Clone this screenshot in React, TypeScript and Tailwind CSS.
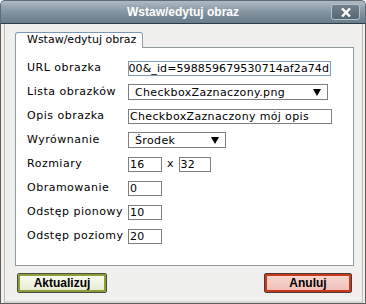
import React from "react"

const font = { fontFamily: '"DejaVu Sans", Verdana, sans-serif' }
const boldFont = { fontFamily: '"Liberation Sans", Arial, sans-serif' }

function Row({ label, children }: { label: string; children: React.ReactNode }) {
  return (
    <div className="flex h-[24px] items-center">
      <div className="w-[101px] shrink-0 text-[11px] tracking-[0.5px] text-black">{label}</div>
      {children}
    </div>
  )
}

function Field({ value, className = "" }: { value: string; className?: string }) {
  return (
    <div
      className={`flex h-[15px] items-center overflow-hidden whitespace-nowrap border border-[#808080] bg-white pl-[1px] text-[11px] leading-none tracking-[0.35px] text-black ${className}`}
    >
      {value}
    </div>
  )
}

function Select({ value, className = "" }: { value: string; className?: string }) {
  return (
    <div
      className={`flex h-[16px] items-center justify-between border border-[#808080] bg-white pl-[6px] pr-[6px] text-[11px] leading-none tracking-[0.35px] text-black ${className}`}
    >
      <span className="whitespace-nowrap">{value}</span>
      <svg width="8" height="7" viewBox="0 0 8 7">
        <path d="M0 0h8L4 7z" fill="#000" />
      </svg>
    </div>
  )
}

export default function App() {
  return (
    <div className="h-[304px] w-[366px] bg-white" style={font}>
      <div className="flex h-full flex-col">
        {/* title bar */}
        <div className="relative flex h-[24px] shrink-0 items-center justify-center rounded-t-[5px] border border-b-[#2f3a42] border-[#5d6d78] bg-gradient-to-b from-[#aebbc5] via-[#8494a0] to-[#6a7c89]">
          <span className="text-[12px] font-bold text-white" style={boldFont}>
            Wstaw/edytuj obraz
          </span>
          <div className="absolute right-[5px] top-[3px] flex h-[16px] w-[29px] items-center justify-center rounded-[3px] border border-[#b6c2cb] bg-gradient-to-b from-[#74848f] to-[#566671]">
            <svg width="10" height="9" viewBox="0 0 10 9">
              <path d="M1 0.5l8 8M9 0.5l-8 8" stroke="#fff" strokeWidth="2.4" />
            </svg>
          </div>
        </div>

        {/* body */}
        <div className="flex flex-1 flex-col border-x border-b border-[#5c5c5c] bg-[#f0f0ee] shadow-[inset_3px_0_0_#f0f0ee,inset_4px_0_0_#cdb9a4,inset_-2px_0_0_#f0f0ee,inset_-3px_0_0_#cdb9a4,inset_0_-2px_0_#d8d8d4]">
          <div className="flex flex-col px-[14px] pt-[8px]">
            {/* tab */}
            <div className="relative z-10 -mb-[1px] flex h-[16px] w-[128px] items-center rounded-t-[3px] border border-b-0 border-[#919b9c] border-t-[#7a96b0] bg-white pl-[11px] text-[11px] text-black">
              Wstaw/edytuj obraz
            </div>
            {/* panel */}
            <div className="h-[219px] w-[339px] border border-[#919b9c] bg-white pl-[11px] pt-[8px]">
              <Row label="URL obrazka">
                <div className="flex h-[15px] w-[203px] items-center justify-end overflow-hidden whitespace-nowrap border border-[#7f9db9] bg-white pr-[1px] text-[11px] leading-none tracking-[0.1px] text-black">
                  400&amp;_id=598859679530714af2a74d
                </div>
              </Row>
              <Row label="Lista obrazków">
                <Select value="CheckboxZaznaczony.png" className="w-[200px]" />
              </Row>
              <Row label="Opis obrazka">
                <Field value="CheckboxZaznaczony mój opis" className="w-[204px]" />
              </Row>
              <Row label="Wyrównanie">
                <Select value="Środek" className="w-[98px]" />
              </Row>
              <Row label="Rozmiary">
                <Field value="16" className="w-[34px]" />
                <span className="mx-[5px] text-[11px] text-black">x</span>
                <Field value="32" className="w-[32px]" />
              </Row>
              <Row label="Obramowanie">
                <Field value="0" className="w-[34px]" />
              </Row>
              <Row label="Odstęp pionowy">
                <Field value="10" className="w-[34px]" />
              </Row>
              <Row label="Odstęp poziomy">
                <Field value="20" className="w-[34px]" />
              </Row>
            </div>
          </div>

          {/* buttons */}
          <div className="mt-[7px] flex justify-between pl-[16px] pr-[13px]" style={boldFont}>
            <button className="flex h-[20px] w-[90px] items-center justify-center rounded-[2px] border border-[#4a4a40] bg-gradient-to-b from-[#fbfcf2] to-[#e5ead0] text-[12px] font-bold text-black shadow-[inset_0_0_0_2px_#8ca03a]">
              Aktualizuj
            </button>
            <button className="flex h-[20px] w-[88px] items-center justify-center rounded-[2px] border border-[#4a3a38] bg-gradient-to-b from-[#f8d9d4] to-[#efbdb5] text-[12px] font-bold text-black shadow-[inset_0_0_0_2px_#c83a17]">
              Anuluj
            </button>
          </div>
        </div>
      </div>
    </div>
  )
}
